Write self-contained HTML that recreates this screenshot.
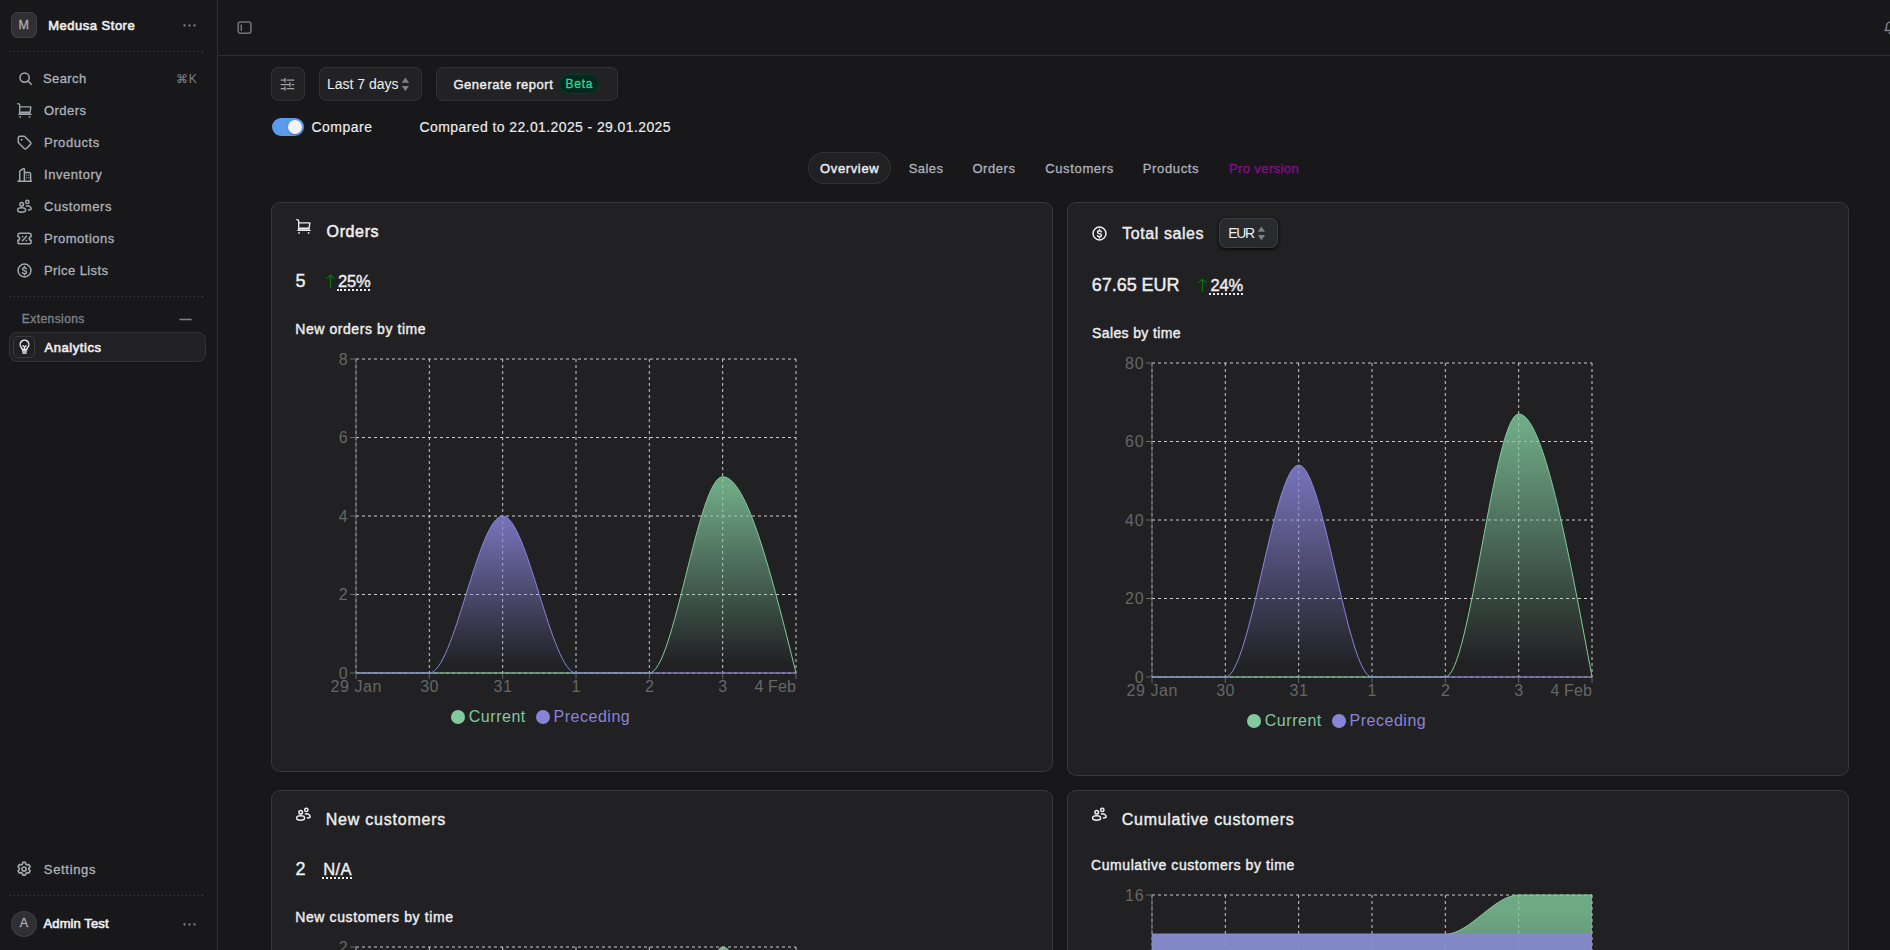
<!DOCTYPE html>
<html lang="en"><head><meta charset="utf-8"><title>Analytics</title><style>
html,body{margin:0;padding:0;background:#18181B;}
body{width:1890px;height:950px;overflow:hidden;position:relative;font-family:"Liberation Sans",sans-serif;-webkit-font-smoothing:antialiased;}
.b{position:absolute;box-sizing:border-box;}
.t{position:absolute;white-space:nowrap;display:block;}
.ic{position:absolute;overflow:visible;}
</style></head>
<body>
<div class="b" style="left:217px;top:0;width:1px;height:950px;background:#2E2E32"></div>
<div class="b" style="left:218px;top:55px;width:1672px;height:1px;background:#2E2E32"></div>
<div class="b" style="left:10px;top:51px;width:195px;height:1px;background-image:linear-gradient(to right,#46474c 1px,transparent 1px);background-size:4px 1px"></div>
<div class="b" style="left:10px;top:296px;width:195px;height:1px;background-image:linear-gradient(to right,#46474c 1px,transparent 1px);background-size:4px 1px"></div>
<div class="b" style="left:10px;top:895px;width:195px;height:1px;background-image:linear-gradient(to right,#46474c 1px,transparent 1px);background-size:4px 1px"></div>
<div class="b" style="left:12px;top:13px;width:24px;height:24px;border-radius:6px;background:#303034;box-shadow:0 0 0 1px #3e3e43"></div>
<div class="b" style="left:10px;top:333px;width:195px;height:28px;border-radius:7px;background:#212124;box-shadow:0 0 0 1px #333337,0 1px 2px rgba(0,0,0,.4)"></div>
<div class="b" style="left:14px;top:337px;width:20px;height:20px;border-radius:4px;background:#212124;box-shadow:0 0 0 1px #3a3a3e"></div>
<div class="b" style="left:12px;top:912px;width:24px;height:24px;border-radius:12px;background:#303034;box-shadow:0 0 0 1px #3e3e43"></div>
<div class="b" style="left:272px;top:68px;width:32px;height:32px;border-radius:6px;background:#222225;box-shadow:0 0 0 1px #323236,0 1px 2px rgba(0,0,0,.4)"></div>
<div class="b" style="left:320px;top:68px;width:101px;height:32px;border-radius:6px;background:#222225;box-shadow:0 0 0 1px #323236,0 1px 2px rgba(0,0,0,.4)"></div>
<div class="b" style="left:437px;top:68px;width:180px;height:32px;border-radius:6px;background:#222225;box-shadow:0 0 0 1px #323236,0 1px 2px rgba(0,0,0,.4)"></div>
<div class="b" style="left:559px;top:74px;width:40px;height:20px;border-radius:10px;background:#03291d;box-shadow:inset 0 0 0 1px #0b3a2a"></div>
<div class="b" style="left:272px;top:118px;width:32px;height:18px;border-radius:9px;background:#5A9BEE"></div>
<div class="b" style="left:288px;top:120px;width:14px;height:14px;border-radius:7px;background:#F4F4F6;box-shadow:0 1px 2px rgba(0,0,0,.3)"></div>
<div class="b" style="left:809px;top:153px;width:81px;height:30px;border-radius:15px;background:#212124;box-shadow:0 0 0 1px #333337,0 1px 2px rgba(0,0,0,.4)"></div>
<div class="b" style="left:272px;top:203px;width:780px;height:568px;border-radius:8px;background:#212124;box-shadow:0 0 0 1px #37393C,0 1px 2px rgba(0,0,0,.4)"></div>
<div class="b" style="left:1068px;top:203px;width:780px;height:572px;border-radius:8px;background:#212124;box-shadow:0 0 0 1px #37393C,0 1px 2px rgba(0,0,0,.4)"></div>
<div class="b" style="left:272px;top:791px;width:780px;height:400px;border-radius:8px;background:#212124;box-shadow:0 0 0 1px #37393C,0 1px 2px rgba(0,0,0,.4)"></div>
<div class="b" style="left:1068px;top:791px;width:780px;height:400px;border-radius:8px;background:#212124;box-shadow:0 0 0 1px #37393C,0 1px 2px rgba(0,0,0,.4)"></div>
<div class="b" style="left:451px;top:710px;width:14px;height:14px;border-radius:7px;background:#82ca9d"></div>
<div class="b" style="left:536px;top:710px;width:14px;height:14px;border-radius:7px;background:#8884d8"></div>
<div class="b" style="left:1220px;top:219px;width:57px;height:28px;border-radius:6px;background:#292A2E;box-shadow:0 0 0 1px #3b3d41,0 1px 3px 1.500px rgba(0,0,0,.6)"></div>
<div class="b" style="left:1247px;top:714px;width:14px;height:14px;border-radius:7px;background:#82ca9d"></div>
<div class="b" style="left:1332px;top:714px;width:14px;height:14px;border-radius:7px;background:#8884d8"></div>
<svg style="position:absolute;left:346px;top:357px" width="454" height="326" viewBox="0 0 454 326" fill="none"><defs><linearGradient id="g10" x1="0" y1="0" x2="0" y2="1"><stop offset="5%" stop-color="#82ca9d" stop-opacity="0.8"/><stop offset="95%" stop-color="#82ca9d" stop-opacity="0"/></linearGradient><linearGradient id="g11" x1="0" y1="0" x2="0" y2="1"><stop offset="5%" stop-color="#8884d8" stop-opacity="0.8"/><stop offset="95%" stop-color="#8884d8" stop-opacity="0"/></linearGradient></defs><g stroke="#ccc" stroke-dasharray="3 3" stroke-width="1"><line x1="10.00" y1="316.00" x2="450.00" y2="316.00"/><line x1="10.00" y1="237.50" x2="450.00" y2="237.50"/><line x1="10.00" y1="159.00" x2="450.00" y2="159.00"/><line x1="10.00" y1="80.50" x2="450.00" y2="80.50"/><line x1="10.00" y1="2.00" x2="450.00" y2="2.00"/><line x1="10.00" y1="2.00" x2="10.00" y2="316.00"/><line x1="83.33" y1="2.00" x2="83.33" y2="316.00"/><line x1="156.67" y1="2.00" x2="156.67" y2="316.00"/><line x1="230.00" y1="2.00" x2="230.00" y2="316.00"/><line x1="303.33" y1="2.00" x2="303.33" y2="316.00"/><line x1="376.67" y1="2.00" x2="376.67" y2="316.00"/><line x1="450.00" y1="2.00" x2="450.00" y2="316.00"/></g><g stroke="#666" stroke-width="1"><line x1="10.00" y1="316.00" x2="450.00" y2="316.00"/><line x1="10.00" y1="2.00" x2="10.00" y2="316.00"/><line x1="4.00" y1="316.00" x2="10.00" y2="316.00"/><line x1="4.00" y1="237.50" x2="10.00" y2="237.50"/><line x1="4.00" y1="159.00" x2="10.00" y2="159.00"/><line x1="4.00" y1="80.50" x2="10.00" y2="80.50"/><line x1="4.00" y1="2.00" x2="10.00" y2="2.00"/><line x1="10.00" y1="316.00" x2="10.00" y2="322.00"/><line x1="83.33" y1="316.00" x2="83.33" y2="322.00"/><line x1="156.67" y1="316.00" x2="156.67" y2="322.00"/><line x1="230.00" y1="316.00" x2="230.00" y2="322.00"/><line x1="303.33" y1="316.00" x2="303.33" y2="322.00"/><line x1="376.67" y1="316.00" x2="376.67" y2="322.00"/><line x1="450.00" y1="316.00" x2="450.00" y2="322.00"/></g><path d="M10.00,316.00C34.44,316.00,58.89,316.00,83.33,316.00C107.78,316.00,132.22,316.00,156.67,316.00C181.11,316.00,205.56,316.00,230.00,316.00C254.44,316.00,278.89,316.00,303.33,316.00C327.78,316.00,352.22,119.75,376.67,119.75C401.11,119.75,425.56,217.88,450.00,316.00L450.00,316.00L10.00,316.00Z" fill="url(#g10)" stroke="none"/><path d="M10.00,316.00C34.44,316.00,58.89,316.00,83.33,316.00C107.78,316.00,132.22,316.00,156.67,316.00C181.11,316.00,205.56,316.00,230.00,316.00C254.44,316.00,278.89,316.00,303.33,316.00C327.78,316.00,352.22,119.75,376.67,119.75C401.11,119.75,425.56,217.88,450.00,316.00" stroke="#82ca9d" stroke-width="1" fill="none"/><path d="M10.00,316.00C34.44,316.00,58.89,316.00,83.33,316.00C107.78,316.00,132.22,159.00,156.67,159.00C181.11,159.00,205.56,316.00,230.00,316.00C254.44,316.00,278.89,316.00,303.33,316.00C327.78,316.00,352.22,316.00,376.67,316.00C401.11,316.00,425.56,316.00,450.00,316.00L450.00,316.00L10.00,316.00Z" fill="url(#g11)" stroke="none"/><path d="M10.00,316.00C34.44,316.00,58.89,316.00,83.33,316.00C107.78,316.00,132.22,159.00,156.67,159.00C181.11,159.00,205.56,316.00,230.00,316.00C254.44,316.00,278.89,316.00,303.33,316.00C327.78,316.00,352.22,316.00,376.67,316.00C401.11,316.00,425.56,316.00,450.00,316.00" stroke="#8884d8" stroke-width="1" fill="none"/></svg>
<svg style="position:absolute;left:1142px;top:361px" width="454" height="326" viewBox="0 0 454 326" fill="none"><defs><linearGradient id="g20" x1="0" y1="0" x2="0" y2="1"><stop offset="5%" stop-color="#82ca9d" stop-opacity="0.8"/><stop offset="95%" stop-color="#82ca9d" stop-opacity="0"/></linearGradient><linearGradient id="g21" x1="0" y1="0" x2="0" y2="1"><stop offset="5%" stop-color="#8884d8" stop-opacity="0.8"/><stop offset="95%" stop-color="#8884d8" stop-opacity="0"/></linearGradient></defs><g stroke="#ccc" stroke-dasharray="3 3" stroke-width="1"><line x1="10.00" y1="316.00" x2="450.00" y2="316.00"/><line x1="10.00" y1="237.50" x2="450.00" y2="237.50"/><line x1="10.00" y1="159.00" x2="450.00" y2="159.00"/><line x1="10.00" y1="80.50" x2="450.00" y2="80.50"/><line x1="10.00" y1="2.00" x2="450.00" y2="2.00"/><line x1="10.00" y1="2.00" x2="10.00" y2="316.00"/><line x1="83.33" y1="2.00" x2="83.33" y2="316.00"/><line x1="156.67" y1="2.00" x2="156.67" y2="316.00"/><line x1="230.00" y1="2.00" x2="230.00" y2="316.00"/><line x1="303.33" y1="2.00" x2="303.33" y2="316.00"/><line x1="376.67" y1="2.00" x2="376.67" y2="316.00"/><line x1="450.00" y1="2.00" x2="450.00" y2="316.00"/></g><g stroke="#666" stroke-width="1"><line x1="10.00" y1="316.00" x2="450.00" y2="316.00"/><line x1="10.00" y1="2.00" x2="10.00" y2="316.00"/><line x1="4.00" y1="316.00" x2="10.00" y2="316.00"/><line x1="4.00" y1="237.50" x2="10.00" y2="237.50"/><line x1="4.00" y1="159.00" x2="10.00" y2="159.00"/><line x1="4.00" y1="80.50" x2="10.00" y2="80.50"/><line x1="4.00" y1="2.00" x2="10.00" y2="2.00"/><line x1="10.00" y1="316.00" x2="10.00" y2="322.00"/><line x1="83.33" y1="316.00" x2="83.33" y2="322.00"/><line x1="156.67" y1="316.00" x2="156.67" y2="322.00"/><line x1="230.00" y1="316.00" x2="230.00" y2="322.00"/><line x1="303.33" y1="316.00" x2="303.33" y2="322.00"/><line x1="376.67" y1="316.00" x2="376.67" y2="322.00"/><line x1="450.00" y1="316.00" x2="450.00" y2="322.00"/></g><path d="M10.00,316.00C34.44,316.00,58.89,316.00,83.33,316.00C107.78,316.00,132.22,316.00,156.67,316.00C181.11,316.00,205.56,316.00,230.00,316.00C254.44,316.00,278.89,316.00,303.33,316.00C327.78,316.00,352.22,53.02,376.67,53.02C401.11,53.02,425.56,184.51,450.00,316.00L450.00,316.00L10.00,316.00Z" fill="url(#g20)" stroke="none"/><path d="M10.00,316.00C34.44,316.00,58.89,316.00,83.33,316.00C107.78,316.00,132.22,316.00,156.67,316.00C181.11,316.00,205.56,316.00,230.00,316.00C254.44,316.00,278.89,316.00,303.33,316.00C327.78,316.00,352.22,53.02,376.67,53.02C401.11,53.02,425.56,184.51,450.00,316.00" stroke="#82ca9d" stroke-width="1" fill="none"/><path d="M10.00,316.00C34.44,316.00,58.89,316.00,83.33,316.00C107.78,316.00,132.22,104.05,156.67,104.05C181.11,104.05,205.56,316.00,230.00,316.00C254.44,316.00,278.89,316.00,303.33,316.00C327.78,316.00,352.22,316.00,376.67,316.00C401.11,316.00,425.56,316.00,450.00,316.00L450.00,316.00L10.00,316.00Z" fill="url(#g21)" stroke="none"/><path d="M10.00,316.00C34.44,316.00,58.89,316.00,83.33,316.00C107.78,316.00,132.22,104.05,156.67,104.05C181.11,104.05,205.56,316.00,230.00,316.00C254.44,316.00,278.89,316.00,303.33,316.00C327.78,316.00,352.22,316.00,376.67,316.00C401.11,316.00,425.56,316.00,450.00,316.00" stroke="#8884d8" stroke-width="1" fill="none"/></svg>
<svg style="position:absolute;left:346px;top:945px" width="454" height="326" viewBox="0 0 454 326" fill="none"><defs><linearGradient id="g30" x1="0" y1="0" x2="0" y2="1"><stop offset="5%" stop-color="#82ca9d" stop-opacity="0.8"/><stop offset="95%" stop-color="#82ca9d" stop-opacity="0"/></linearGradient><linearGradient id="g31" x1="0" y1="0" x2="0" y2="1"><stop offset="5%" stop-color="#8884d8" stop-opacity="0.8"/><stop offset="95%" stop-color="#8884d8" stop-opacity="0"/></linearGradient></defs><g stroke="#ccc" stroke-dasharray="3 3" stroke-width="1"><line x1="10.00" y1="316.00" x2="450.00" y2="316.00"/><line x1="10.00" y1="159.00" x2="450.00" y2="159.00"/><line x1="10.00" y1="2.00" x2="450.00" y2="2.00"/><line x1="10.00" y1="2.00" x2="10.00" y2="316.00"/><line x1="83.33" y1="2.00" x2="83.33" y2="316.00"/><line x1="156.67" y1="2.00" x2="156.67" y2="316.00"/><line x1="230.00" y1="2.00" x2="230.00" y2="316.00"/><line x1="303.33" y1="2.00" x2="303.33" y2="316.00"/><line x1="376.67" y1="2.00" x2="376.67" y2="316.00"/><line x1="450.00" y1="2.00" x2="450.00" y2="316.00"/></g><g stroke="#666" stroke-width="1"><line x1="10.00" y1="316.00" x2="450.00" y2="316.00"/><line x1="10.00" y1="2.00" x2="10.00" y2="316.00"/><line x1="4.00" y1="316.00" x2="10.00" y2="316.00"/><line x1="4.00" y1="159.00" x2="10.00" y2="159.00"/><line x1="4.00" y1="2.00" x2="10.00" y2="2.00"/><line x1="10.00" y1="316.00" x2="10.00" y2="322.00"/><line x1="83.33" y1="316.00" x2="83.33" y2="322.00"/><line x1="156.67" y1="316.00" x2="156.67" y2="322.00"/><line x1="230.00" y1="316.00" x2="230.00" y2="322.00"/><line x1="303.33" y1="316.00" x2="303.33" y2="322.00"/><line x1="376.67" y1="316.00" x2="376.67" y2="322.00"/><line x1="450.00" y1="316.00" x2="450.00" y2="322.00"/></g><path d="M10.00,316.00C34.44,316.00,58.89,316.00,83.33,316.00C107.78,316.00,132.22,316.00,156.67,316.00C181.11,316.00,205.56,316.00,230.00,316.00C254.44,316.00,278.89,316.00,303.33,316.00C327.78,316.00,352.22,2.00,376.67,2.00C401.11,2.00,425.56,159.00,450.00,316.00L450.00,316.00L10.00,316.00Z" fill="url(#g30)" stroke="none"/><path d="M10.00,316.00C34.44,316.00,58.89,316.00,83.33,316.00C107.78,316.00,132.22,316.00,156.67,316.00C181.11,316.00,205.56,316.00,230.00,316.00C254.44,316.00,278.89,316.00,303.33,316.00C327.78,316.00,352.22,2.00,376.67,2.00C401.11,2.00,425.56,159.00,450.00,316.00" stroke="#82ca9d" stroke-width="1" fill="none"/><path d="M10.00,316.00C34.44,316.00,58.89,316.00,83.33,316.00C107.78,316.00,132.22,316.00,156.67,316.00C181.11,316.00,205.56,316.00,230.00,316.00C254.44,316.00,278.89,316.00,303.33,316.00C327.78,316.00,352.22,316.00,376.67,316.00C401.11,316.00,425.56,316.00,450.00,316.00L450.00,316.00L10.00,316.00Z" fill="url(#g31)" stroke="none"/><path d="M10.00,316.00C34.44,316.00,58.89,316.00,83.33,316.00C107.78,316.00,132.22,316.00,156.67,316.00C181.11,316.00,205.56,316.00,230.00,316.00C254.44,316.00,278.89,316.00,303.33,316.00C327.78,316.00,352.22,316.00,376.67,316.00C401.11,316.00,425.56,316.00,450.00,316.00" stroke="#8884d8" stroke-width="1" fill="none"/></svg>
<svg style="position:absolute;left:1142px;top:893px" width="454" height="326" viewBox="0 0 454 326" fill="none"><defs><linearGradient id="g40" x1="0" y1="0" x2="0" y2="1"><stop offset="5%" stop-color="#82ca9d" stop-opacity="0.8"/><stop offset="95%" stop-color="#82ca9d" stop-opacity="0"/></linearGradient><linearGradient id="g41" x1="0" y1="0" x2="0" y2="1"><stop offset="5%" stop-color="#8884d8" stop-opacity="0.8"/><stop offset="95%" stop-color="#8884d8" stop-opacity="0"/></linearGradient></defs><g stroke="#ccc" stroke-dasharray="3 3" stroke-width="1"><line x1="10.00" y1="316.00" x2="450.00" y2="316.00"/><line x1="10.00" y1="237.50" x2="450.00" y2="237.50"/><line x1="10.00" y1="159.00" x2="450.00" y2="159.00"/><line x1="10.00" y1="80.50" x2="450.00" y2="80.50"/><line x1="10.00" y1="2.00" x2="450.00" y2="2.00"/><line x1="10.00" y1="2.00" x2="10.00" y2="316.00"/><line x1="83.33" y1="2.00" x2="83.33" y2="316.00"/><line x1="156.67" y1="2.00" x2="156.67" y2="316.00"/><line x1="230.00" y1="2.00" x2="230.00" y2="316.00"/><line x1="303.33" y1="2.00" x2="303.33" y2="316.00"/><line x1="376.67" y1="2.00" x2="376.67" y2="316.00"/><line x1="450.00" y1="2.00" x2="450.00" y2="316.00"/></g><g stroke="#666" stroke-width="1"><line x1="10.00" y1="316.00" x2="450.00" y2="316.00"/><line x1="10.00" y1="2.00" x2="10.00" y2="316.00"/><line x1="4.00" y1="316.00" x2="10.00" y2="316.00"/><line x1="4.00" y1="237.50" x2="10.00" y2="237.50"/><line x1="4.00" y1="159.00" x2="10.00" y2="159.00"/><line x1="4.00" y1="80.50" x2="10.00" y2="80.50"/><line x1="4.00" y1="2.00" x2="10.00" y2="2.00"/><line x1="10.00" y1="316.00" x2="10.00" y2="322.00"/><line x1="83.33" y1="316.00" x2="83.33" y2="322.00"/><line x1="156.67" y1="316.00" x2="156.67" y2="322.00"/><line x1="230.00" y1="316.00" x2="230.00" y2="322.00"/><line x1="303.33" y1="316.00" x2="303.33" y2="322.00"/><line x1="376.67" y1="316.00" x2="376.67" y2="322.00"/><line x1="450.00" y1="316.00" x2="450.00" y2="322.00"/></g><path d="M10.00,41.25C34.44,41.25,58.89,41.25,83.33,41.25C107.78,41.25,132.22,41.25,156.67,41.25C181.11,41.25,205.56,41.25,230.00,41.25C254.44,41.25,278.89,41.25,303.33,41.25C327.78,41.25,352.22,2.00,376.67,2.00C401.11,2.00,425.56,2.00,450.00,2.00L450.00,316.00L10.00,316.00Z" fill="url(#g40)" stroke="none"/><path d="M10.00,41.25C34.44,41.25,58.89,41.25,83.33,41.25C107.78,41.25,132.22,41.25,156.67,41.25C181.11,41.25,205.56,41.25,230.00,41.25C254.44,41.25,278.89,41.25,303.33,41.25C327.78,41.25,352.22,2.00,376.67,2.00C401.11,2.00,425.56,2.00,450.00,2.00" stroke="#82ca9d" stroke-width="1" fill="none"/><path d="M10.00,41.25C34.44,41.25,58.89,41.25,83.33,41.25C107.78,41.25,132.22,41.25,156.67,41.25C181.11,41.25,205.56,41.25,230.00,41.25C254.44,41.25,278.89,41.25,303.33,41.25C327.78,41.25,352.22,41.25,376.67,41.25C401.11,41.25,425.56,41.25,450.00,41.25L450.00,316.00L10.00,316.00Z" fill="url(#g41)" stroke="none"/><path d="M10.00,41.25C34.44,41.25,58.89,41.25,83.33,41.25C107.78,41.25,132.22,41.25,156.67,41.25C181.11,41.25,205.56,41.25,230.00,41.25C254.44,41.25,278.89,41.25,303.33,41.25C327.78,41.25,352.22,41.25,376.67,41.25C401.11,41.25,425.56,41.25,450.00,41.25" stroke="#8884d8" stroke-width="1" fill="none"/></svg>
<svg class="ic" style="left:182.3px;top:18px;color:#7D828A" width="15" height="15" viewBox="0 0 15 15"><circle cx="2.500" cy="7.500" r="1.150" fill="currentColor"/><circle cx="7.500" cy="7.500" r="1.150" fill="currentColor"/><circle cx="12.500" cy="7.500" r="1.150" fill="currentColor"/></svg>
<svg class="ic" style="left:18px;top:71.1px;color:#A3A6AD" width="15" height="15" viewBox="0 0 15 15"><circle cx="6.6" cy="6.6" r="4.6" stroke="currentColor" stroke-width="1.5" stroke-linecap="round" stroke-linejoin="round" fill="none"/><path d="M10 10 L13.3 13.3" stroke="currentColor" stroke-width="1.5" stroke-linecap="round" stroke-linejoin="round" fill="none"/></svg>
<svg class="ic" style="left:17px;top:102.8px;color:#A3A6AD" width="15" height="15" viewBox="0 0 15 15"><path d="M.8 .7 2.200 1.200a.8 .8 0 0 1 .5 .75V11.200M2.700 3.900H13.900L13 9.600H2.700M1.900 11.200H14" stroke="currentColor" stroke-width="1.350" stroke-linecap="round" stroke-linejoin="round" fill="none"/><rect x="3.400" y="8" width="9.700" height="1.600" fill="currentColor" opacity=".5"/><circle cx="3.100" cy="13.900" r=".85" fill="currentColor"/><circle cx="12.600" cy="13.900" r=".85" fill="currentColor"/></svg>
<svg class="ic" style="left:17px;top:134.8px;color:#A3A6AD" width="15" height="15" viewBox="0 0 15 15"><path d="M1.3 2.8a1.5 1.5 0 0 1 1.5-1.5h4.1a1.5 1.5 0 0 1 1.06.44l5.5 5.5a1.5 1.5 0 0 1 0 2.12l-4.1 4.1a1.5 1.5 0 0 1-2.12 0l-5.5-5.5a1.5 1.5 0 0 1-.44-1.06Z" stroke="currentColor" stroke-width="1.5" stroke-linecap="round" stroke-linejoin="round" fill="none"/><circle cx="4.7" cy="4.7" r=".95" fill="currentColor"/></svg>
<svg class="ic" style="left:17px;top:166.8px;color:#A3A6AD" width="15" height="15" viewBox="0 0 15 15"><path d="M.9 14.2h13.6M2.7 14.2V4.6c0-.4.2-.75.55-.95L6.3 1.6c.5-.3 1.1.05 1.1.65V5.6M7.4 5.6h5a1.2 1.2 0 0 1 1.2 1.2v7.4M7.4 5.6v8.6" stroke="currentColor" stroke-width="1.5" stroke-linecap="round" stroke-linejoin="round" fill="none"/><rect x="9.1" y="7.6" width="1.1" height="1.1" fill="currentColor"/><rect x="11.2" y="7.6" width="1.1" height="1.1" fill="currentColor"/><rect x="9.1" y="10.1" width="1.1" height="1.1" fill="currentColor"/><rect x="11.2" y="10.1" width="1.1" height="1.1" fill="currentColor"/></svg>
<svg class="ic" style="left:17px;top:198.8px;color:#A3A6AD" width="15" height="15" viewBox="0 0 15 15"><circle cx="4.700" cy="5.200" r="1.800" stroke="currentColor" stroke-width="1.5" stroke-linecap="round" stroke-linejoin="round" fill="none"/><ellipse cx="4.600" cy="11" rx="4" ry="2.200" stroke="currentColor" stroke-width="1.5" stroke-linecap="round" stroke-linejoin="round" fill="none"/><circle cx="10.300" cy="2.900" r="1.650" stroke="currentColor" stroke-width="1.5" stroke-linecap="round" stroke-linejoin="round" fill="none"/><path d="M9.400 6.900c2.600-.5 4.600.8 4.700 2.500c0 .9-1 1.500-2.600 1.600" stroke="currentColor" stroke-width="1.5" stroke-linecap="round" stroke-linejoin="round" fill="none"/></svg>
<svg class="ic" style="left:17px;top:230.8px;color:#A3A6AD" width="15" height="15" viewBox="0 0 15 15"><path d="M.9 4a1.800 1.800 0 0 1 1.800-1.800h9.600A1.800 1.800 0 0 1 14.100 4v1.700a1.800 1.800 0 0 0 0 3.600V11a1.800 1.800 0 0 1-1.800 1.800H2.700A1.800 1.800 0 0 1 .9 11V9.300a1.800 1.800 0 0 0 0-3.600Z" stroke="currentColor" stroke-width="1.5" stroke-linecap="round" stroke-linejoin="round" fill="none"/><path d="M9.500 5.300 5.500 9.700" stroke="currentColor" stroke-width="1.5" stroke-linecap="round" stroke-linejoin="round" fill="none"/><circle cx="5.600" cy="5.500" r=".85" fill="currentColor"/><circle cx="9.400" cy="9.500" r=".85" fill="currentColor"/></svg>
<svg class="ic" style="left:17px;top:262.8px;color:#A3A6AD" width="15" height="15" viewBox="0 0 15 15"><circle cx="7.500" cy="7.500" r="6.450" stroke="currentColor" stroke-width="1.5" stroke-linecap="round" stroke-linejoin="round" fill="none"/><path d="M9.400 5.900c-.3-.7-1-1.100-1.900-1.100-1.150 0-2 .6-2 1.450 0 2.100 4 .85 4 2.950 0 .9-.85 1.500-2.050 1.500-.95 0-1.700-.4-2.050-1.100M7.500 3.500v1.300M7.500 10.700v1.300" stroke="currentColor" stroke-width="1.400" stroke-linecap="round" stroke-linejoin="round" fill="none"/></svg>
<svg class="ic" style="left:178px;top:312px;color:#7D828A" width="15" height="15" viewBox="0 0 15 15"><path d="M2 7.500h11" stroke="currentColor" stroke-width="1.5" stroke-linecap="round" stroke-linejoin="round" fill="none"/></svg>
<svg class="ic" style="left:17px;top:340.2px;color:#EDEEF0" width="15" height="15" viewBox="0 0 15 15"><path d="M5.300 9.500c0-.9-.45-1.400-1.050-2.100A4.350 4.350 0 1 1 10.750 7.400c-.6.7-1.050 1.200-1.050 2.100Z" stroke="currentColor" stroke-width="1.400" stroke-linejoin="round" fill="none"/><path d="M5.500 11.100h4M5.900 12.900h3.200" stroke="currentColor" stroke-width="1.500" stroke-linecap="round" fill="none"/><path d="M7.500 9.400V7.200M5.900 5.700l1.600 1.500 1.600-1.500" stroke="currentColor" stroke-width="1.200" stroke-linecap="round" stroke-linejoin="round" fill="none"/></svg>
<svg class="ic" style="left:16.4px;top:861.4px;color:#A3A6AD" width="16.2" height="16.2" viewBox="0 0 15 15"><path d="M6.3 1.3h2.4l.5 1.7 1 .6 1.7-.4 1.2 2.1-1.2 1.3v1.2l1.2 1.3-1.2 2.1-1.7-.4-1 .6-.5 1.7H6.3l-.5-1.7-1-.6-1.7.4-1.2-2.1 1.2-1.3V6.6L1.9 5.3l1.2-2.1 1.7.4 1-.6Z" stroke="currentColor" stroke-width="1.5" stroke-linecap="round" stroke-linejoin="round" fill="none"/><circle cx="7.5" cy="7.5" r="1.9" stroke="currentColor" stroke-width="1.5" stroke-linecap="round" stroke-linejoin="round" fill="none"/></svg>
<svg class="ic" style="left:182px;top:917px;color:#7D828A" width="15" height="15" viewBox="0 0 15 15"><circle cx="2.500" cy="7.500" r="1.150" fill="currentColor"/><circle cx="7.500" cy="7.500" r="1.150" fill="currentColor"/><circle cx="12.500" cy="7.500" r="1.150" fill="currentColor"/></svg>
<svg class="ic" style="left:237px;top:20px;color:#717276" width="15" height="15" viewBox="0 0 15 15"><rect x="1.200" y="2" width="12.700" height="11.300" rx="2.200" stroke="currentColor" stroke-width="1.5" stroke-linecap="round" stroke-linejoin="round" fill="none"/><path d="M4.300 4.900v5.500" stroke="currentColor" stroke-width="1.5" stroke-linecap="round" stroke-linejoin="round" fill="none"/></svg>
<svg class="ic" style="left:1883px;top:20px;color:#7D828A" width="15" height="15" viewBox="0 0 15 15"><path d="M2 10.6h11c-1-1-1.5-2-1.5-3.6V6a4 4 0 0 0-8 0v1c0 1.600-.5 2.600-1.500 3.600ZM6.200 12.800a1.400 1.400 0 0 0 2.600 0" stroke="currentColor" stroke-width="1.5" stroke-linecap="round" stroke-linejoin="round" fill="none"/></svg>
<svg class="ic" style="left:280px;top:77px;color:#A0A3AA" width="15" height="15" viewBox="0 0 15 15"><path d="M.7 3.200H5M6.700 3.200h7.500M.7 7.500h8.600M11.700 7.500h2.500M.7 11.600H5M6.700 11.600h7.500M5 1.100v4.300M10 5.300v4.400M5 9.500v4.300" stroke="currentColor" stroke-width="1.250" stroke-linecap="butt" fill="none"/></svg>
<svg class="ic" style="left:398.1px;top:77.1px;color:#7F8084" width="15" height="15" viewBox="0 0 15 15"><path d="M3.800 5.800 7.400 .6 11 5.800ZM3.800 9 7.400 14.300 11 9Z" fill="currentColor"/></svg>
<svg class="ic" style="left:296px;top:219px;color:#EDEEF0" width="15" height="15" viewBox="0 0 15 15"><path d="M.8 .7 2.200 1.200a.8 .8 0 0 1 .5 .75V11.200M2.700 3.900H13.900L13 9.600H2.700M1.900 11.200H14" stroke="currentColor" stroke-width="1.350" stroke-linecap="round" stroke-linejoin="round" fill="none"/><rect x="3.400" y="8" width="9.700" height="1.600" fill="currentColor" opacity=".5"/><circle cx="3.100" cy="13.900" r=".85" fill="currentColor"/><circle cx="12.600" cy="13.900" r=".85" fill="currentColor"/></svg>
<svg class="ic" style="left:1092px;top:226.3px;color:#EDEEF0" width="15" height="15" viewBox="0 0 15 15"><circle cx="7.500" cy="7.500" r="6.450" stroke="currentColor" stroke-width="1.5" stroke-linecap="round" stroke-linejoin="round" fill="none"/><path d="M9.400 5.900c-.3-.7-1-1.100-1.900-1.100-1.150 0-2 .6-2 1.450 0 2.100 4 .85 4 2.950 0 .9-.85 1.500-2.050 1.500-.95 0-1.700-.4-2.050-1.100M7.500 3.500v1.300M7.500 10.700v1.300" stroke="currentColor" stroke-width="1.400" stroke-linecap="round" stroke-linejoin="round" fill="none"/></svg>
<svg class="ic" style="left:1254.2px;top:225.9px;color:#7F8084" width="15" height="15" viewBox="0 0 15 15"><path d="M3.800 5.800 7.400 .6 11 5.800ZM3.800 9 7.400 14.300 11 9Z" fill="currentColor"/></svg>
<svg class="ic" style="left:296px;top:807px;color:#EDEEF0" width="15" height="15" viewBox="0 0 15 15"><circle cx="4.700" cy="5.200" r="1.800" stroke="currentColor" stroke-width="1.5" stroke-linecap="round" stroke-linejoin="round" fill="none"/><ellipse cx="4.600" cy="11" rx="4" ry="2.200" stroke="currentColor" stroke-width="1.5" stroke-linecap="round" stroke-linejoin="round" fill="none"/><circle cx="10.300" cy="2.900" r="1.650" stroke="currentColor" stroke-width="1.5" stroke-linecap="round" stroke-linejoin="round" fill="none"/><path d="M9.400 6.900c2.600-.5 4.600.8 4.700 2.500c0 .9-1 1.500-2.600 1.600" stroke="currentColor" stroke-width="1.5" stroke-linecap="round" stroke-linejoin="round" fill="none"/></svg>
<svg class="ic" style="left:1092px;top:807px;color:#EDEEF0" width="15" height="15" viewBox="0 0 15 15"><circle cx="4.700" cy="5.200" r="1.800" stroke="currentColor" stroke-width="1.5" stroke-linecap="round" stroke-linejoin="round" fill="none"/><ellipse cx="4.600" cy="11" rx="4" ry="2.200" stroke="currentColor" stroke-width="1.5" stroke-linecap="round" stroke-linejoin="round" fill="none"/><circle cx="10.300" cy="2.900" r="1.650" stroke="currentColor" stroke-width="1.5" stroke-linecap="round" stroke-linejoin="round" fill="none"/><path d="M9.400 6.900c2.600-.5 4.600.8 4.700 2.500c0 .9-1 1.500-2.600 1.600" stroke="currentColor" stroke-width="1.5" stroke-linecap="round" stroke-linejoin="round" fill="none"/></svg>
<span class="t" id="t_avM" style="left:18.5px;top:18.52px;font-size:12.5px;line-height:12.5px;color:#ADB1B8;font-weight:400;letter-spacing:1.500px;-webkit-text-stroke:0.27px #ADB1B8;">M</span>
<span class="t" id="t_store" style="left:48.2px;top:18.80px;font-size:13px;line-height:13px;color:#EDEEF0;font-weight:400;letter-spacing:0.505px;-webkit-text-stroke:0.61px #EDEEF0;">Medusa Store</span>
<span class="t" id="t_search" style="left:43.0px;top:71.60px;font-size:13px;line-height:13px;color:#ADB1B8;font-weight:400;letter-spacing:0.401px;-webkit-text-stroke:0.30px #ADB1B8;">Search</span>
<span class="t" id="t_cmdk" style="left:176px;top:73.34px;font-size:12px;line-height:12px;color:#7D828A;font-weight:400;letter-spacing:0.742px;">⌘K</span>
<span class="t" id="t_nav_orders" style="left:44.0px;top:104.00px;font-size:13px;line-height:13px;color:#ADB1B8;font-weight:400;letter-spacing:0.445px;-webkit-text-stroke:0.30px #ADB1B8;">Orders</span>
<span class="t" id="t_nav_products" style="left:44.0px;top:136.00px;font-size:13px;line-height:13px;color:#ADB1B8;font-weight:400;letter-spacing:0.561px;-webkit-text-stroke:0.30px #ADB1B8;">Products</span>
<span class="t" id="t_nav_inventory" style="left:44.0px;top:168.00px;font-size:13px;line-height:13px;color:#ADB1B8;font-weight:400;letter-spacing:0.546px;-webkit-text-stroke:0.30px #ADB1B8;">Inventory</span>
<span class="t" id="t_nav_customers" style="left:44.0px;top:200.00px;font-size:13px;line-height:13px;color:#ADB1B8;font-weight:400;letter-spacing:0.571px;-webkit-text-stroke:0.30px #ADB1B8;">Customers</span>
<span class="t" id="t_nav_promotions" style="left:44.0px;top:232.00px;font-size:13px;line-height:13px;color:#ADB1B8;font-weight:400;letter-spacing:0.504px;-webkit-text-stroke:0.30px #ADB1B8;">Promotions</span>
<span class="t" id="t_nav_pricelists" style="left:44.0px;top:264.00px;font-size:13px;line-height:13px;color:#ADB1B8;font-weight:400;letter-spacing:0.403px;-webkit-text-stroke:0.30px #ADB1B8;">Price Lists</span>
<span class="t" id="t_ext" style="left:21.8px;top:312.84px;font-size:12px;line-height:12px;color:#7D828A;font-weight:400;letter-spacing:0.430px;-webkit-text-stroke:0.34px #7D828A;">Extensions</span>
<span class="t" id="t_analytics" style="left:44.5px;top:340.60px;font-size:13px;line-height:13px;color:#EDEEF0;font-weight:400;letter-spacing:0.553px;-webkit-text-stroke:0.61px #EDEEF0;">Analytics</span>
<span class="t" id="t_settings" style="left:43.8px;top:863.20px;font-size:13px;line-height:13px;color:#ADB1B8;font-weight:400;letter-spacing:0.677px;-webkit-text-stroke:0.30px #ADB1B8;">Settings</span>
<span class="t" id="t_avA" style="left:19.8px;top:917.42px;font-size:12.5px;line-height:12.5px;color:#ADB1B8;font-weight:400;letter-spacing:0.789px;-webkit-text-stroke:0.27px #ADB1B8;">A</span>
<span class="t" id="t_admin" style="left:43.6px;top:916.90px;font-size:13px;line-height:13px;color:#EDEEF0;font-weight:400;letter-spacing:0.092px;-webkit-text-stroke:0.61px #EDEEF0;">Admin Test</span>
<span class="t" id="t_last7" style="left:327.0px;top:77.15px;font-size:14px;line-height:14px;color:#EDEEF0;font-weight:400;letter-spacing:-0.000px;">Last 7 days</span>
<span class="t" id="t_genrep" style="left:453.4px;top:78.00px;font-size:13px;line-height:13px;color:#EDEEF0;font-weight:400;letter-spacing:0.548px;-webkit-text-stroke:0.41px #EDEEF0;">Generate report</span>
<span class="t" id="t_beta" style="left:565.6px;top:77.84px;font-size:12px;line-height:12px;color:#34D399;font-weight:400;letter-spacing:0.678px;-webkit-text-stroke:0.27px #34D399;">Beta</span>
<span class="t" id="t_compare" style="left:311.5px;top:119.85px;font-size:14px;line-height:14px;color:#EDEEF0;font-weight:400;letter-spacing:0.487px;-webkit-text-stroke:0.14px #EDEEF0;">Compare</span>
<span class="t" id="t_compared" style="left:419.6px;top:119.85px;font-size:14px;line-height:14px;color:#EDEEF0;font-weight:400;letter-spacing:0.400px;-webkit-text-stroke:0.14px #EDEEF0;">Compared to 22.01.2025 - 29.01.2025</span>
<span class="t" id="t_tab0" style="left:820.0px;top:162.20px;font-size:13px;line-height:13px;color:#EDEEF0;font-weight:400;letter-spacing:0.639px;-webkit-text-stroke:0.41px #EDEEF0;">Overview</span>
<span class="t" id="t_tab1" style="left:908.8px;top:162.20px;font-size:13px;line-height:13px;color:#ADB1B8;font-weight:400;letter-spacing:0.394px;-webkit-text-stroke:0.30px #ADB1B8;">Sales</span>
<span class="t" id="t_tab2" style="left:972.4px;top:162.20px;font-size:13px;line-height:13px;color:#ADB1B8;font-weight:400;letter-spacing:0.560px;-webkit-text-stroke:0.30px #ADB1B8;">Orders</span>
<span class="t" id="t_tab3" style="left:1045.2px;top:162.20px;font-size:13px;line-height:13px;color:#ADB1B8;font-weight:400;letter-spacing:0.649px;-webkit-text-stroke:0.30px #ADB1B8;">Customers</span>
<span class="t" id="t_tab4" style="left:1142.7px;top:162.20px;font-size:13px;line-height:13px;color:#ADB1B8;font-weight:400;letter-spacing:0.661px;-webkit-text-stroke:0.30px #ADB1B8;">Products</span>
<span class="t" id="t_tab5" style="left:1228.9px;top:162.20px;font-size:13px;line-height:13px;color:#870E87;font-weight:400;letter-spacing:0.404px;-webkit-text-stroke:0.30px #870E87;">Pro version</span>
<span class="t" id="t_h_orders" style="left:326.6px;top:223.66px;font-size:16px;line-height:16px;color:#EDEEF0;font-weight:400;letter-spacing:0.616px;-webkit-text-stroke:0.54px #EDEEF0;">Orders</span>
<span class="t" id="t_n5" style="left:295.6px;top:271.96px;font-size:18px;line-height:18px;color:#EDEEF0;font-weight:400;letter-spacing:1.176px;-webkit-text-stroke:0.41px #EDEEF0;">5</span>
<span class="t" id="t_ar1" style="left:321.45px;top:274.13px;font-size:14.5px;line-height:14.5px;color:#008000;font-weight:300;letter-spacing:2.400px;font-family:Noto Sans CJK SC,Liberation Sans,sans-serif;transform:scaleX(1.31);transform-origin:0 0;">↑</span>
<span class="t" id="t_p25" style="left:336.8px;top:273.03px;font-size:16.5px;line-height:16.5px;color:#EDEEF0;font-weight:400;letter-spacing:-0.204px;-webkit-text-stroke:0.41px #EDEEF0;border-bottom:2px dotted #EDEEF0;padding-bottom:0;height:16.1px;padding-left:1.2px;">25%</span>
<span class="t" id="t_s_orders" style="left:295.2px;top:321.95px;font-size:14px;line-height:14px;color:#EDEEF0;font-weight:400;letter-spacing:0.578px;-webkit-text-stroke:0.41px #EDEEF0;">New orders by time</span>
<span class="t" id="t_c1y0" style="left:348.3px;top:665.76px;font-size:16px;line-height:16px;color:#666666;font-weight:400;letter-spacing:0.700px;transform:translateX(-100%);">0</span>
<span class="t" id="t_c1y2" style="left:348.3px;top:587.26px;font-size:16px;line-height:16px;color:#666666;font-weight:400;letter-spacing:0.700px;transform:translateX(-100%);">2</span>
<span class="t" id="t_c1y4" style="left:348.3px;top:508.76px;font-size:16px;line-height:16px;color:#666666;font-weight:400;letter-spacing:0.700px;transform:translateX(-100%);">4</span>
<span class="t" id="t_c1y6" style="left:348.3px;top:430.26px;font-size:16px;line-height:16px;color:#666666;font-weight:400;letter-spacing:0.700px;transform:translateX(-100%);">6</span>
<span class="t" id="t_c1y8" style="left:348.3px;top:351.76px;font-size:16px;line-height:16px;color:#666666;font-weight:400;letter-spacing:0.700px;transform:translateX(-100%);">8</span>
<span class="t" id="t_c1x0" style="left:356.3px;top:679.36px;font-size:16px;line-height:16px;color:#666666;font-weight:400;letter-spacing:0.600px;transform:translateX(-50%);">29 Jan</span>
<span class="t" id="t_c1x1" style="left:429.6333333333333px;top:679.36px;font-size:16px;line-height:16px;color:#666666;font-weight:400;letter-spacing:0.600px;transform:translateX(-50%);">30</span>
<span class="t" id="t_c1x2" style="left:502.96666666666664px;top:679.36px;font-size:16px;line-height:16px;color:#666666;font-weight:400;letter-spacing:0.600px;transform:translateX(-50%);">31</span>
<span class="t" id="t_c1x3" style="left:576.3px;top:679.36px;font-size:16px;line-height:16px;color:#666666;font-weight:400;letter-spacing:0.600px;transform:translateX(-50%);">1</span>
<span class="t" id="t_c1x4" style="left:649.6333333333332px;top:679.36px;font-size:16px;line-height:16px;color:#666666;font-weight:400;letter-spacing:0.600px;transform:translateX(-50%);">2</span>
<span class="t" id="t_c1x5" style="left:722.9666666666667px;top:679.36px;font-size:16px;line-height:16px;color:#666666;font-weight:400;letter-spacing:0.600px;transform:translateX(-50%);">3</span>
<span class="t" id="t_c1x6" style="left:796.1px;top:679.36px;font-size:16px;line-height:16px;color:#666666;font-weight:400;letter-spacing:0.150px;transform:translateX(-100%);">4 Feb</span>
<span class="t" id="t_c1l0" style="left:468.8px;top:708.56px;font-size:16px;line-height:16px;color:#82ca9d;font-weight:400;letter-spacing:0.520px;">Current</span>
<span class="t" id="t_c1l1" style="left:553.6px;top:708.56px;font-size:16px;line-height:16px;color:#8884d8;font-weight:400;letter-spacing:0.506px;">Preceding</span>
<span class="t" id="t_h_sales" style="left:1122.2px;top:225.96px;font-size:16px;line-height:16px;color:#EDEEF0;font-weight:400;letter-spacing:0.582px;-webkit-text-stroke:0.41px #EDEEF0;">Total sales</span>
<span class="t" id="t_eur" style="left:1228.3px;top:226.25px;font-size:14px;line-height:14px;color:#EDEEF0;font-weight:400;letter-spacing:-1.354px;">EUR</span>
<span class="t" id="t_n67" style="left:1091.8px;top:275.76px;font-size:18px;line-height:18px;color:#EDEEF0;font-weight:400;letter-spacing:-0.051px;-webkit-text-stroke:0.41px #EDEEF0;">67.65 EUR</span>
<span class="t" id="t_ar2" style="left:1192.75px;top:278.13px;font-size:14.5px;line-height:14.5px;color:#008000;font-weight:300;letter-spacing:2.400px;font-family:Noto Sans CJK SC,Liberation Sans,sans-serif;transform:scaleX(1.31);transform-origin:0 0;">↑</span>
<span class="t" id="t_p24" style="left:1209.4px;top:277.03px;font-size:16.5px;line-height:16.5px;color:#EDEEF0;font-weight:400;letter-spacing:-0.204px;-webkit-text-stroke:0.41px #EDEEF0;border-bottom:2px dotted #EDEEF0;padding-bottom:0;height:16.1px;padding-left:1.2px;">24%</span>
<span class="t" id="t_s_sales" style="left:1092px;top:325.65px;font-size:14px;line-height:14px;color:#EDEEF0;font-weight:400;letter-spacing:0.381px;-webkit-text-stroke:0.41px #EDEEF0;">Sales by time</span>
<span class="t" id="t_c2y0" style="left:1144.3px;top:669.76px;font-size:16px;line-height:16px;color:#666666;font-weight:400;letter-spacing:0.700px;transform:translateX(-100%);">0</span>
<span class="t" id="t_c2y20" style="left:1144.3px;top:591.26px;font-size:16px;line-height:16px;color:#666666;font-weight:400;letter-spacing:0.700px;transform:translateX(-100%);">20</span>
<span class="t" id="t_c2y40" style="left:1144.3px;top:512.76px;font-size:16px;line-height:16px;color:#666666;font-weight:400;letter-spacing:0.700px;transform:translateX(-100%);">40</span>
<span class="t" id="t_c2y60" style="left:1144.3px;top:434.26px;font-size:16px;line-height:16px;color:#666666;font-weight:400;letter-spacing:0.700px;transform:translateX(-100%);">60</span>
<span class="t" id="t_c2y80" style="left:1144.3px;top:355.76px;font-size:16px;line-height:16px;color:#666666;font-weight:400;letter-spacing:0.700px;transform:translateX(-100%);">80</span>
<span class="t" id="t_c2x0" style="left:1152.3px;top:683.36px;font-size:16px;line-height:16px;color:#666666;font-weight:400;letter-spacing:0.600px;transform:translateX(-50%);">29 Jan</span>
<span class="t" id="t_c2x1" style="left:1225.6333333333332px;top:683.36px;font-size:16px;line-height:16px;color:#666666;font-weight:400;letter-spacing:0.600px;transform:translateX(-50%);">30</span>
<span class="t" id="t_c2x2" style="left:1298.9666666666667px;top:683.36px;font-size:16px;line-height:16px;color:#666666;font-weight:400;letter-spacing:0.600px;transform:translateX(-50%);">31</span>
<span class="t" id="t_c2x3" style="left:1372.3px;top:683.36px;font-size:16px;line-height:16px;color:#666666;font-weight:400;letter-spacing:0.600px;transform:translateX(-50%);">1</span>
<span class="t" id="t_c2x4" style="left:1445.6333333333332px;top:683.36px;font-size:16px;line-height:16px;color:#666666;font-weight:400;letter-spacing:0.600px;transform:translateX(-50%);">2</span>
<span class="t" id="t_c2x5" style="left:1518.9666666666667px;top:683.36px;font-size:16px;line-height:16px;color:#666666;font-weight:400;letter-spacing:0.600px;transform:translateX(-50%);">3</span>
<span class="t" id="t_c2x6" style="left:1592.1px;top:683.36px;font-size:16px;line-height:16px;color:#666666;font-weight:400;letter-spacing:0.150px;transform:translateX(-100%);">4 Feb</span>
<span class="t" id="t_c2l0" style="left:1264.8px;top:712.56px;font-size:16px;line-height:16px;color:#82ca9d;font-weight:400;letter-spacing:0.520px;">Current</span>
<span class="t" id="t_c2l1" style="left:1349.6px;top:712.56px;font-size:16px;line-height:16px;color:#8884d8;font-weight:400;letter-spacing:0.506px;">Preceding</span>
<span class="t" id="t_h_newc" style="left:325.8px;top:811.66px;font-size:16px;line-height:16px;color:#EDEEF0;font-weight:400;letter-spacing:0.765px;-webkit-text-stroke:0.41px #EDEEF0;">New customers</span>
<span class="t" id="t_n2" style="left:295.4px;top:859.96px;font-size:18px;line-height:18px;color:#EDEEF0;font-weight:400;letter-spacing:0.984px;-webkit-text-stroke:0.41px #EDEEF0;">2</span>
<span class="t" id="t_na" style="left:322px;top:861.03px;font-size:16.5px;line-height:16.5px;color:#EDEEF0;font-weight:400;letter-spacing:0.432px;-webkit-text-stroke:0.41px #EDEEF0;border-bottom:2px dotted #EDEEF0;padding-bottom:0;height:16.1px;padding-left:1.2px;">N/A</span>
<span class="t" id="t_s_newc" style="left:295.2px;top:909.95px;font-size:14px;line-height:14px;color:#EDEEF0;font-weight:400;letter-spacing:0.615px;-webkit-text-stroke:0.41px #EDEEF0;">New customers by time</span>
<span class="t" id="t_c3y0" style="left:348.3px;top:1253.76px;font-size:16px;line-height:16px;color:#666666;font-weight:400;letter-spacing:0.700px;transform:translateX(-100%);">0</span>
<span class="t" id="t_c3y1" style="left:348.3px;top:1096.76px;font-size:16px;line-height:16px;color:#666666;font-weight:400;letter-spacing:0.700px;transform:translateX(-100%);">1</span>
<span class="t" id="t_c3y2" style="left:348.3px;top:939.76px;font-size:16px;line-height:16px;color:#666666;font-weight:400;letter-spacing:0.700px;transform:translateX(-100%);">2</span>
<span class="t" id="t_c3x0" style="left:356.3px;top:1267.36px;font-size:16px;line-height:16px;color:#666666;font-weight:400;letter-spacing:0.600px;transform:translateX(-50%);">29 Jan</span>
<span class="t" id="t_c3x1" style="left:429.6333333333333px;top:1267.36px;font-size:16px;line-height:16px;color:#666666;font-weight:400;letter-spacing:0.600px;transform:translateX(-50%);">30</span>
<span class="t" id="t_c3x2" style="left:502.96666666666664px;top:1267.36px;font-size:16px;line-height:16px;color:#666666;font-weight:400;letter-spacing:0.600px;transform:translateX(-50%);">31</span>
<span class="t" id="t_c3x3" style="left:576.3px;top:1267.36px;font-size:16px;line-height:16px;color:#666666;font-weight:400;letter-spacing:0.600px;transform:translateX(-50%);">1</span>
<span class="t" id="t_c3x4" style="left:649.6333333333332px;top:1267.36px;font-size:16px;line-height:16px;color:#666666;font-weight:400;letter-spacing:0.600px;transform:translateX(-50%);">2</span>
<span class="t" id="t_c3x5" style="left:722.9666666666667px;top:1267.36px;font-size:16px;line-height:16px;color:#666666;font-weight:400;letter-spacing:0.600px;transform:translateX(-50%);">3</span>
<span class="t" id="t_c3x6" style="left:796.1px;top:1267.36px;font-size:16px;line-height:16px;color:#666666;font-weight:400;letter-spacing:0.150px;transform:translateX(-100%);">4 Feb</span>
<span class="t" id="t_h_cum" style="left:1121.8px;top:811.66px;font-size:16px;line-height:16px;color:#EDEEF0;font-weight:400;letter-spacing:0.716px;-webkit-text-stroke:0.41px #EDEEF0;">Cumulative customers</span>
<span class="t" id="t_s_cum" style="left:1091px;top:857.75px;font-size:14px;line-height:14px;color:#EDEEF0;font-weight:400;letter-spacing:0.582px;-webkit-text-stroke:0.41px #EDEEF0;">Cumulative customers by time</span>
<span class="t" id="t_c4y0" style="left:1144.3px;top:1201.76px;font-size:16px;line-height:16px;color:#666666;font-weight:400;letter-spacing:0.700px;transform:translateX(-100%);">0</span>
<span class="t" id="t_c4y4" style="left:1144.3px;top:1123.26px;font-size:16px;line-height:16px;color:#666666;font-weight:400;letter-spacing:0.700px;transform:translateX(-100%);">4</span>
<span class="t" id="t_c4y8" style="left:1144.3px;top:1044.76px;font-size:16px;line-height:16px;color:#666666;font-weight:400;letter-spacing:0.700px;transform:translateX(-100%);">8</span>
<span class="t" id="t_c4y12" style="left:1144.3px;top:966.26px;font-size:16px;line-height:16px;color:#666666;font-weight:400;letter-spacing:0.700px;transform:translateX(-100%);">12</span>
<span class="t" id="t_c4y16" style="left:1144.3px;top:887.76px;font-size:16px;line-height:16px;color:#666666;font-weight:400;letter-spacing:0.700px;transform:translateX(-100%);">16</span>
<span class="t" id="t_c4x0" style="left:1152.3px;top:1215.36px;font-size:16px;line-height:16px;color:#666666;font-weight:400;letter-spacing:0.600px;transform:translateX(-50%);">29 Jan</span>
<span class="t" id="t_c4x1" style="left:1225.6333333333332px;top:1215.36px;font-size:16px;line-height:16px;color:#666666;font-weight:400;letter-spacing:0.600px;transform:translateX(-50%);">30</span>
<span class="t" id="t_c4x2" style="left:1298.9666666666667px;top:1215.36px;font-size:16px;line-height:16px;color:#666666;font-weight:400;letter-spacing:0.600px;transform:translateX(-50%);">31</span>
<span class="t" id="t_c4x3" style="left:1372.3px;top:1215.36px;font-size:16px;line-height:16px;color:#666666;font-weight:400;letter-spacing:0.600px;transform:translateX(-50%);">1</span>
<span class="t" id="t_c4x4" style="left:1445.6333333333332px;top:1215.36px;font-size:16px;line-height:16px;color:#666666;font-weight:400;letter-spacing:0.600px;transform:translateX(-50%);">2</span>
<span class="t" id="t_c4x5" style="left:1518.9666666666667px;top:1215.36px;font-size:16px;line-height:16px;color:#666666;font-weight:400;letter-spacing:0.600px;transform:translateX(-50%);">3</span>
<span class="t" id="t_c4x6" style="left:1592.1px;top:1215.36px;font-size:16px;line-height:16px;color:#666666;font-weight:400;letter-spacing:0.150px;transform:translateX(-100%);">4 Feb</span>
</body></html>
